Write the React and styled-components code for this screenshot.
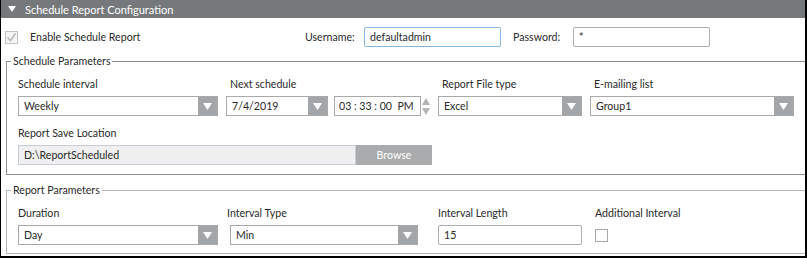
import React from 'react'
import styled, { createGlobalStyle } from 'styled-components'

const GlobalStyle = createGlobalStyle`
html, body {
  margin: 0;
  padding: 0;
  background: #fff;
}
body {
  font-family: "Segoe UI", Lato, "Noto Sans", sans-serif;
  font-size: 10.6px;
  color: #2a2a2a;
}
`

const ArrowDown = () => (
  <svg width="9" height="7" viewBox="0 0 9 7">
    <polygon points="0,0 9,0 4.5,7" fill="#fff" />
  </svg>
)

const Combo = ({ value, width }) => (
  <ComboBox $w={width}>
    <ComboValue>{value}</ComboValue>
    <ComboArrow>
      <ArrowDown />
    </ComboArrow>
  </ComboBox>
)

const Spinner = () => (
  <SpinBox>
    <svg width="8" height="19" viewBox="0 0 8 19">
      <polygon points="0,8 8,8 4,1" fill="#b4b4b4" />
      <polygon points="0,11 8,11 4,18" fill="#b4b4b4" />
    </svg>
  </SpinBox>
)

const App = () => {
  return (
    <>
      <GlobalStyle />
      <Frame>
        <Header>
          <svg width="8" height="6" viewBox="0 0 8 6">
            <polygon points="0,0 8,0 4,6" fill="#fff" />
          </svg>
          <span>Schedule Report Configuration</span>
        </Header>

        <TopRow>
          <CheckWrap>
            <CheckBox $disabled>
              <svg width="11" height="11" viewBox="0 0 11 11">
                <polyline points="1.5,5.5 4.5,8.5 9.5,1.5" fill="none" stroke="#b9b9b9" strokeWidth="1.6" />
              </svg>
            </CheckBox>
            <span>Enable Schedule Report</span>
          </CheckWrap>
          <InlineLabel>Username:</InlineLabel>
          <TextInput $focus>defaultadmin</TextInput>
          <InlineLabel $pad={12}>Password:</InlineLabel>
          <TextInput>*</TextInput>
        </TopRow>

        <Group>
          <Legend>Schedule Parameters</Legend>
          <GroupBody $top={8} $bottom={9}>
            <Row>
              <Field $w={200}>
                <Label>Schedule interval</Label>
                <Combo value="Weekly" />
              </Field>
              <Field $w={205} $ml={8}>
                <Label $indent={4}>Next schedule</Label>
                <Inline>
                  <Combo value="7/4/2019" width={102} />
                  <TimeBox>03 : 33 : 00  PM</TimeBox>
                  <Spinner />
                </Inline>
              </Field>
              <Field $w={144} $ml={7}>
                <Label $indent={4}>Report File type</Label>
                <Combo value="Excel" />
              </Field>
              <Field $w={204} $ml={8}>
                <Label $indent={4}>E-mailing list</Label>
                <Combo value="Group1" />
              </Field>
            </Row>
            <Row $mt={9}>
              <Field $w={414}>
                <Label>Report Save Location</Label>
                <Inline>
                  <PathInput>D:\ReportScheduled</PathInput>
                  <BrowseButton>Browse</BrowseButton>
                </Inline>
              </Field>
            </Row>
          </GroupBody>
        </Group>

        <Group $mt={8} $light>
          <Legend>Report Parameters</Legend>
          <GroupBody $top={8} $bottom={8}>
            <Row>
              <Field $w={200}>
                <Label>Duration</Label>
                <Combo value="Day" />
              </Field>
              <Field $w={188} $ml={12}>
                <Label $indent={-3}>Interval Type</Label>
                <Combo value="Min" />
              </Field>
              <Field $w={144} $ml={20}>
                <Label>Interval Length</Label>
                <TextInput $w={144}>15</TextInput>
              </Field>
              <Field $w={150} $ml={13}>
                <Label>Additional Interval</Label>
                <CheckSlot>
                  <CheckBox />
                </CheckSlot>
              </Field>
            </Row>
          </GroupBody>
        </Group>
      </Frame>
    </>
  )
}

const Frame = styled.div`
width: 807px;
height: 258px;
box-sizing: border-box;
border-left: 1px solid #000;
border-right: 2px solid #000;
border-bottom: 2px solid #000;
overflow: hidden;
background: #fff;
`
const Header = styled.div`
height: 18px;
background: #76797c;
color: #fff;
display: flex;
align-items: center;
gap: 9px;
padding-left: 7px;
font-size: 11px;
`
const TopRow = styled.div`
display: grid;
grid-template-columns: 300px 59px 137px 72px 137px;
align-items: center;
height: 20px;
margin-top: 9px;
padding-left: 4px;
`
const CheckWrap = styled.div`
display: flex;
align-items: center;
gap: 12px;
`
const CheckBox = styled.div`
width: 13px;
height: 13px;
box-sizing: border-box;
border: 1px solid ${(p) => (p.$disabled ? '#c4c4c4' : '#a9a9a9')};
background: ${(p) => (p.$disabled ? '#f4f4f4' : '#fff')};
display: flex;
align-items: center;
justify-content: center;
`
const InlineLabel = styled.div`
padding-left: ${(p) => p.$pad || 0}px;
`
const TextInput = styled.div`
width: ${(p) => p.$w || 137}px;
height: 20px;
box-sizing: border-box;
border: 1px solid ${(p) => (p.$focus ? '#86b6e2' : '#abadb3')};
border-radius: 2px;
padding-left: 5px;
display: flex;
align-items: center;
background: #fff;
`
const Group = styled.fieldset`
margin: ${(p) => p.$mt || 7}px 0 0 5px;
padding: 0;
min-width: 0;
border: 1px solid ${(p) => (p.$light ? '#b8b8b8' : '#8e8e8e')};
border-right: none;
`
const Legend = styled.legend`
margin-left: 4px;
padding: 0 2px;
line-height: 14px;
`
const GroupBody = styled.div`
padding: ${(p) => p.$top}px 0 ${(p) => p.$bottom}px 11px;
`
const Row = styled.div`
display: flex;
margin-top: ${(p) => p.$mt || 0}px;
`
const Field = styled.div`
width: ${(p) => p.$w}px;
margin-left: ${(p) => p.$ml || 0}px;
display: flex;
flex-direction: column;
gap: 4px;
`
const Label = styled.div`
line-height: 16px;
padding-left: ${(p) => Math.max(p.$indent || 0, 0)}px;
margin-left: ${(p) => Math.min(p.$indent || 0, 0)}px;
white-space: nowrap;
`
const Inline = styled.div`
display: flex;
align-items: center;
`
const ComboBox = styled.div`
width: ${(p) => (p.$w ? p.$w + 'px' : '100%')};
height: 20px;
box-sizing: border-box;
border: 1px solid #a9a9a9;
display: flex;
background: #fff;
`
const ComboValue = styled.div`
flex: 1;
padding-left: 5px;
display: flex;
align-items: center;
`
const ComboArrow = styled.div`
width: 19px;
background: #a3a6a8;
display: flex;
align-items: center;
justify-content: center;
`
const TimeBox = styled.div`
width: 87px;
height: 20px;
box-sizing: border-box;
margin-left: 6px;
border: 1px solid #a9a9a9;
padding-left: 4px;
display: flex;
align-items: center;
white-space: pre;
`
const SpinBox = styled.div`
width: 10px;
height: 20px;
display: flex;
align-items: center;
justify-content: center;
`
const PathInput = styled.div`
width: 338px;
height: 20px;
box-sizing: border-box;
border: 1px solid #c5cdd6;
background: #f0f0f0;
padding-left: 5px;
display: flex;
align-items: center;
`
const BrowseButton = styled.div`
width: 76px;
height: 20px;
background: #a9abad;
color: #fff;
display: flex;
align-items: center;
justify-content: center;
`
const CheckSlot = styled.div`
height: 20px;
display: flex;
align-items: center;
`

export default App
